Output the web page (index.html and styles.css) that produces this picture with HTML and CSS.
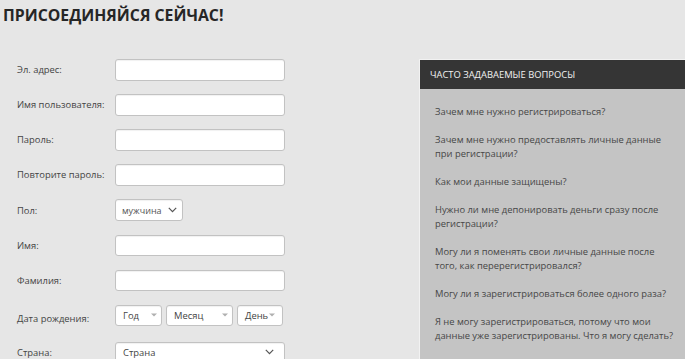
FILE: index.html
```html
<!DOCTYPE html>
<html lang="ru">
<head>
  <meta charset="UTF-8" />
  <meta name="viewport" content="width=device-width, initial-scale=1.0" />
  <title>Присоединяйся сейчас</title>
  <link rel="stylesheet" href="styles.css">
</head>
<body>
  <h1 class="title">ПРИСОЕДИНЯЙСЯ СЕЙЧАС!</h1>

  <div class="page">
    <form class="signup">
      <label class="label" for="email">Эл. адрес:</label>
      <input class="field" type="text" id="email" />

      <label class="label" for="username">Имя пользователя:</label>
      <input class="field" type="text" id="username" />

      <label class="label" for="password">Пароль:</label>
      <input class="field" type="password" id="password" />

      <label class="label" for="password2">Повторите пароль:</label>
      <input class="field" type="password" id="password2" />

      <span class="label">Пол:</span>
      <div class="select gender">
        <span>мужчина</span>
        <svg class="chevron" width="9" height="6" viewBox="0 0 9 6"><path d="M0.8 0.8 L4.5 4.6 L8.2 0.8" fill="none" stroke="#555" stroke-width="1.2"/></svg>
      </div>

      <label class="label" for="firstname">Имя:</label>
      <input class="field" type="text" id="firstname" />

      <label class="label" for="lastname">Фамилия:</label>
      <input class="field" type="text" id="lastname" />

      <span class="label label-bottom">Дата рождения:</span>
      <div class="date">
        <div class="select year">
          <span>Год</span>
          <svg class="caret" width="6" height="4" viewBox="0 0 6 4"><path d="M0 0.5 L6 0.5 L3 3.5 Z" fill="#b0b0b0"/></svg>
        </div>
        <div class="select month">
          <span>Месяц</span>
          <svg class="caret" width="6" height="4" viewBox="0 0 6 4"><path d="M0 0.5 L6 0.5 L3 3.5 Z" fill="#b0b0b0"/></svg>
        </div>
        <div class="select day">
          <span>День</span>
          <svg class="caret" width="6" height="4" viewBox="0 0 6 4"><path d="M0 0.5 L6 0.5 L3 3.5 Z" fill="#b0b0b0"/></svg>
        </div>
      </div>

      <span class="label country-label">Страна:</span>
      <div class="select country">
        <span>Страна</span>
        <svg class="chevron" width="9" height="6" viewBox="0 0 9 6"><path d="M0.8 0.8 L4.5 4.6 L8.2 0.8" fill="none" stroke="#555" stroke-width="1.2"/></svg>
      </div>
    </form>

    <aside class="faq">
      <div class="faq-head">ЧАСТО ЗАДАВАЕМЫЕ ВОПРОСЫ</div>
      <ul class="faq-list">
        <li>Зачем мне нужно регистрироваться?</li>
        <li>Зачем мне нужно предоставлять личные данные при регистрации?</li>
        <li>Как мои данные защищены?</li>
        <li>Нужно ли мне депонировать деньги сразу после регистрации?</li>
        <li>Могу ли я поменять свои личные данные после того, как перерегистрировался?</li>
        <li>Могу ли я зарегистрироваться более одного раза?</li>
        <li>Я не могу зарегистрироваться, потому что мои данные уже зарегистрированы. Что я могу сделать?</li>
      </ul>
    </aside>
  </div>
</body>
</html>
```

FILE: styles.css
```css
body {
  margin: 0;
  background-color: #e6e6e6;
  font-family: 'Open Sans', 'Noto Sans', sans-serif;
  color: #444;
  overflow: hidden;
}

.title {
  margin: 4px 0 0 3px;
  font-size: 15.8px;
  line-height: 22px;
  font-weight: 700;
  color: #262626;
}

.page {
  display: flex;
  align-items: flex-start;
  margin-top: 33px;
}

.signup {
  display: grid;
  grid-template-columns: 98px 170px;
  row-gap: 13.5px;
  padding-left: 17px;
  width: 268px;
  flex-shrink: 0;
}

.label {
  align-self: center;
  font-size: 9.4px;
  color: #444;
}

.label-bottom {
  align-self: end;
  line-height: 14px;
}

.field,
.select {
  box-sizing: border-box;
  height: 21.5px;
  border: 1px solid #c2c2c2;
  border-radius: 3px;
  background: #fff;
  box-shadow: inset 0 1px 1px rgba(0, 0, 0, 0.06);
}

.field {
  width: 170px;
  margin: 0;
  padding: 0 6px;
}

.select {
  display: flex;
  align-items: center;
  padding: 0 7px;
  font-size: 9.4px;
  color: #444;
}

.select svg {
  flex-shrink: 0;
}

.gender {
  width: 68px;
  height: 22px;
  padding: 0 6px;
  font-size: 9px;
  color: #555;
}

.gender .chevron {
  margin-left: 6px;
}

.date {
  display: flex;
  gap: 4px;
}

.year {
  width: 47px;
}

.year .caret {
  margin-left: 12px;
}

.month {
  width: 67px;
}

.month .caret {
  margin-left: 19px;
}

.day {
  width: 46px;
  padding-right: 4px;
}

.day .caret {
  margin-left: 1px;
}

.country-label {
  margin-top: 2px;
}

.country {
  margin-top: 2px;
  justify-content: space-between;
  padding-right: 10px;
}

.faq {
  margin-left: 134px;
  width: 275px;
  flex-shrink: 0;
  border-top: 1px solid #f2f2f2;
  border-left: 1px solid #f2f2f2;
  background-color: #c4c4c4;
  height: 320px;
}

.faq-head {
  height: 29px;
  line-height: 29px;
  padding-left: 10px;
  background-color: #353535;
  color: #f2f2f2;
  font-size: 9.4px;
}

.faq-list {
  list-style: none;
  margin: 0;
  padding: 16px 22px 0 15px;
  font-size: 9.4px;
  line-height: 14px;
  color: #474747;
}

.faq-list li {
  margin-bottom: 14px;
}
```
